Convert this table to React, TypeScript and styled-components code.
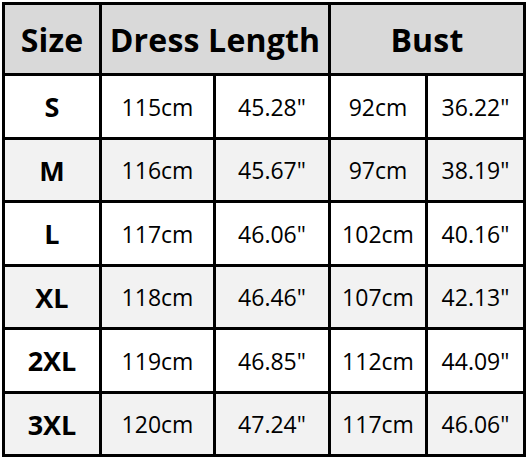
import React from 'react';
import styled, { createGlobalStyle } from 'styled-components';

const GlobalStyle = createGlobalStyle`
  html, body {
    margin: 0;
    padding: 0;
    background: #ffffff;
  }
  body {
    font-family: 'Open Sans', 'Noto Sans', sans-serif;
  }
`;

const Page = styled.div`
  padding: 2px 0 0 2px;
`;

const Grid = styled.div`
  display: grid;
  width: 524px;
  box-sizing: border-box;
  grid-template-columns: 94px 111px 112px 94px 95px;
  grid-template-rows: 68px repeat(3, 61px 60px);
  gap: 3px;
  padding: 3px;
  background: #000000;
`;

const HeadCell = styled.div<{ span: number }>`
  grid-column: span ${p => p.span};
  display: flex;
  align-items: center;
  justify-content: center;
  background: #d9d9d9;
  color: #000000;
  font-weight: 700;
  font-size: 32px;
  letter-spacing: 0.2px;
`;

const Cell = styled.div<{ shaded: boolean; bold?: boolean }>`
  display: flex;
  align-items: center;
  justify-content: center;
  background: ${p => (p.shaded ? '#f2f2f2' : '#ffffff')};
  color: #000000;
  font-weight: ${p => (p.bold ? 700 : 400)};
  font-size: ${p => (p.bold ? '27px' : '23px')};
`;

const rows = [
  ['S', '115cm', '45.28"', '92cm', '36.22"'],
  ['M', '116cm', '45.67"', '97cm', '38.19"'],
  ['L', '117cm', '46.06"', '102cm', '40.16"'],
  ['XL', '118cm', '46.46"', '107cm', '42.13"'],
  ['2XL', '119cm', '46.85"', '112cm', '44.09"'],
  ['3XL', '120cm', '47.24"', '117cm', '46.06"'],
];

export default function App() {
  return (
    <Page>
      <GlobalStyle />
      <Grid>
        <HeadCell span={1}>Size</HeadCell>
        <HeadCell span={2}>Dress Length</HeadCell>
        <HeadCell span={2}>Bust</HeadCell>
        {rows.map((row, i) =>
          row.map((value, j) => (
            <Cell key={`${i}-${j}`} shaded={i % 2 === 1} bold={j === 0}>
              {value}
            </Cell>
          )),
        )}
      </Grid>
    </Page>
  );
}
